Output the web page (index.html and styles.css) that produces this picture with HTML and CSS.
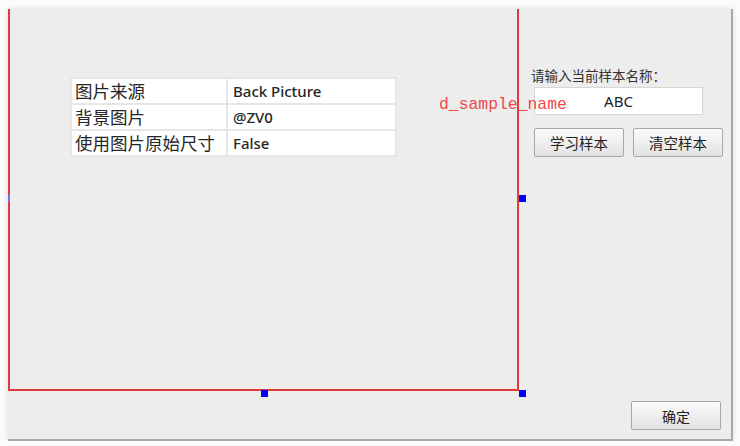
FILE: index.html
```html
<!DOCTYPE html>
<html lang="zh">
<head>
    <meta charset="UTF-8">
    <title>样本学习</title>
    <link rel="stylesheet" href="styles.css">
</head>
<body>
    <div class="window">
        <div class="design">
            <table class="props">
                <tr><td class="key">图片来源</td><td class="val">Back Picture</td></tr>
                <tr><td class="key">背景图片</td><td class="val">@ZV0</td></tr>
                <tr><td class="key">使用图片原始尺寸</td><td class="val">False</td></tr>
            </table>
            <!-- selection handles -->
            <span class="handle h-left"></span>
            <span class="handle h-right"></span>
            <span class="handle h-bottom"></span>
            <span class="handle h-corner"></span>
            <span class="tag">d_sample_name</span>
        </div>
        <div class="side">
            <label class="caption" for="sample">请输入当前样本名称：</label>
            <input type="text" id="sample" class="name" value="ABC">
            <div class="btns">
                <button class="btn">学习样本</button>
                <button class="btn">清空样本</button>
            </div>
        </div>
        <div class="foot">
            <button class="btn ok">确定</button>
        </div>
    </div>
</body>
</html>
```
FILE: styles.css
```css
body {
    margin: 0;
    padding: 9px 0 0 8px;
    background: #fbfbfb;
    font-family: "Noto Sans", "Noto Sans CJK SC", sans-serif;
}
.window {
    width: 723px;
    height: 430px;
    display: grid;
    grid-template-columns: 511px 1fr;
    grid-template-rows: 382px 1fr;
    background: #ededed;
    border-right: 2px solid #a9a9a9;
    border-bottom: 2px solid #a9a9a9;
    box-shadow: 0 0 6px rgba(0, 0, 0, 0.12);
}
.design {
    position: relative;
    border: 2px solid #e03a3a;
    border-top: none;
    box-sizing: border-box;
    padding: 68px 0 0 60px;
}
.props {
    border-collapse: collapse;
    background: #ffffff;
    color: #262626;
}
.props td {
    height: 24px;
    padding: 0;
    border: 2px solid #e6e6e6;
    white-space: nowrap;
    line-height: 24px;
    overflow: hidden;
}
.props .key {
    width: 151px;
    padding-left: 3px;
    font-family: "Noto Sans CJK SC", sans-serif;
    font-size: 17.5px;
}
.props .val {
    width: 162px;
    padding-left: 5px;
    font-size: 15px;
    font-weight: 500;
}
.handle {
    position: absolute;
    width: 7px;
    height: 7px;
    background: #0000ff;
}
.h-left { left: -2px; top: 186px; width: 2px; background: #7070ff; }
.h-right { right: -9px; top: 186px; }
.h-bottom { left: 251px; bottom: -8px; }
.h-corner { right: -9px; bottom: -8px; }
.tag {
    position: absolute;
    left: 429px;
    top: 86px;
    font-family: "Liberation Mono", monospace;
    font-size: 16.4px;
    color: #f04848;
    z-index: 2;
}
.side {
    padding: 57px 0 0 12px;
    color: #333;
}
.caption {
    display: block;
    font-family: "Noto Sans CJK SC", sans-serif;
    font-size: 13.5px;
    line-height: 18px;
}
.name {
    display: block;
    margin: 3px 0 0 3px;
    width: 169px;
    height: 28px;
    box-sizing: border-box;
    border: 1px solid #d6d6d6;
    background: #fff;
    text-align: center;
    font-family: "Noto Sans", sans-serif;
    font-size: 15px;
    color: #222;
    padding: 0;
}
.btns {
    display: flex;
    gap: 9px;
    margin: 13px 0 0 3px;
}
.btn {
    width: 90px;
    height: 29px;
    border: 1px solid #a8a8a8;
    border-radius: 2px;
    background: linear-gradient(#fbfbfb, #e2e2e2);
    font-family: "Noto Sans CJK SC", sans-serif;
    font-size: 14.5px;
    color: #222;
    padding: 0;
}
.foot {
    grid-column: 1 / 3;
    display: flex;
    justify-content: flex-end;
    padding: 10px 10px 0 0;
}
.ok {
    font-size: 14px;
}
```
